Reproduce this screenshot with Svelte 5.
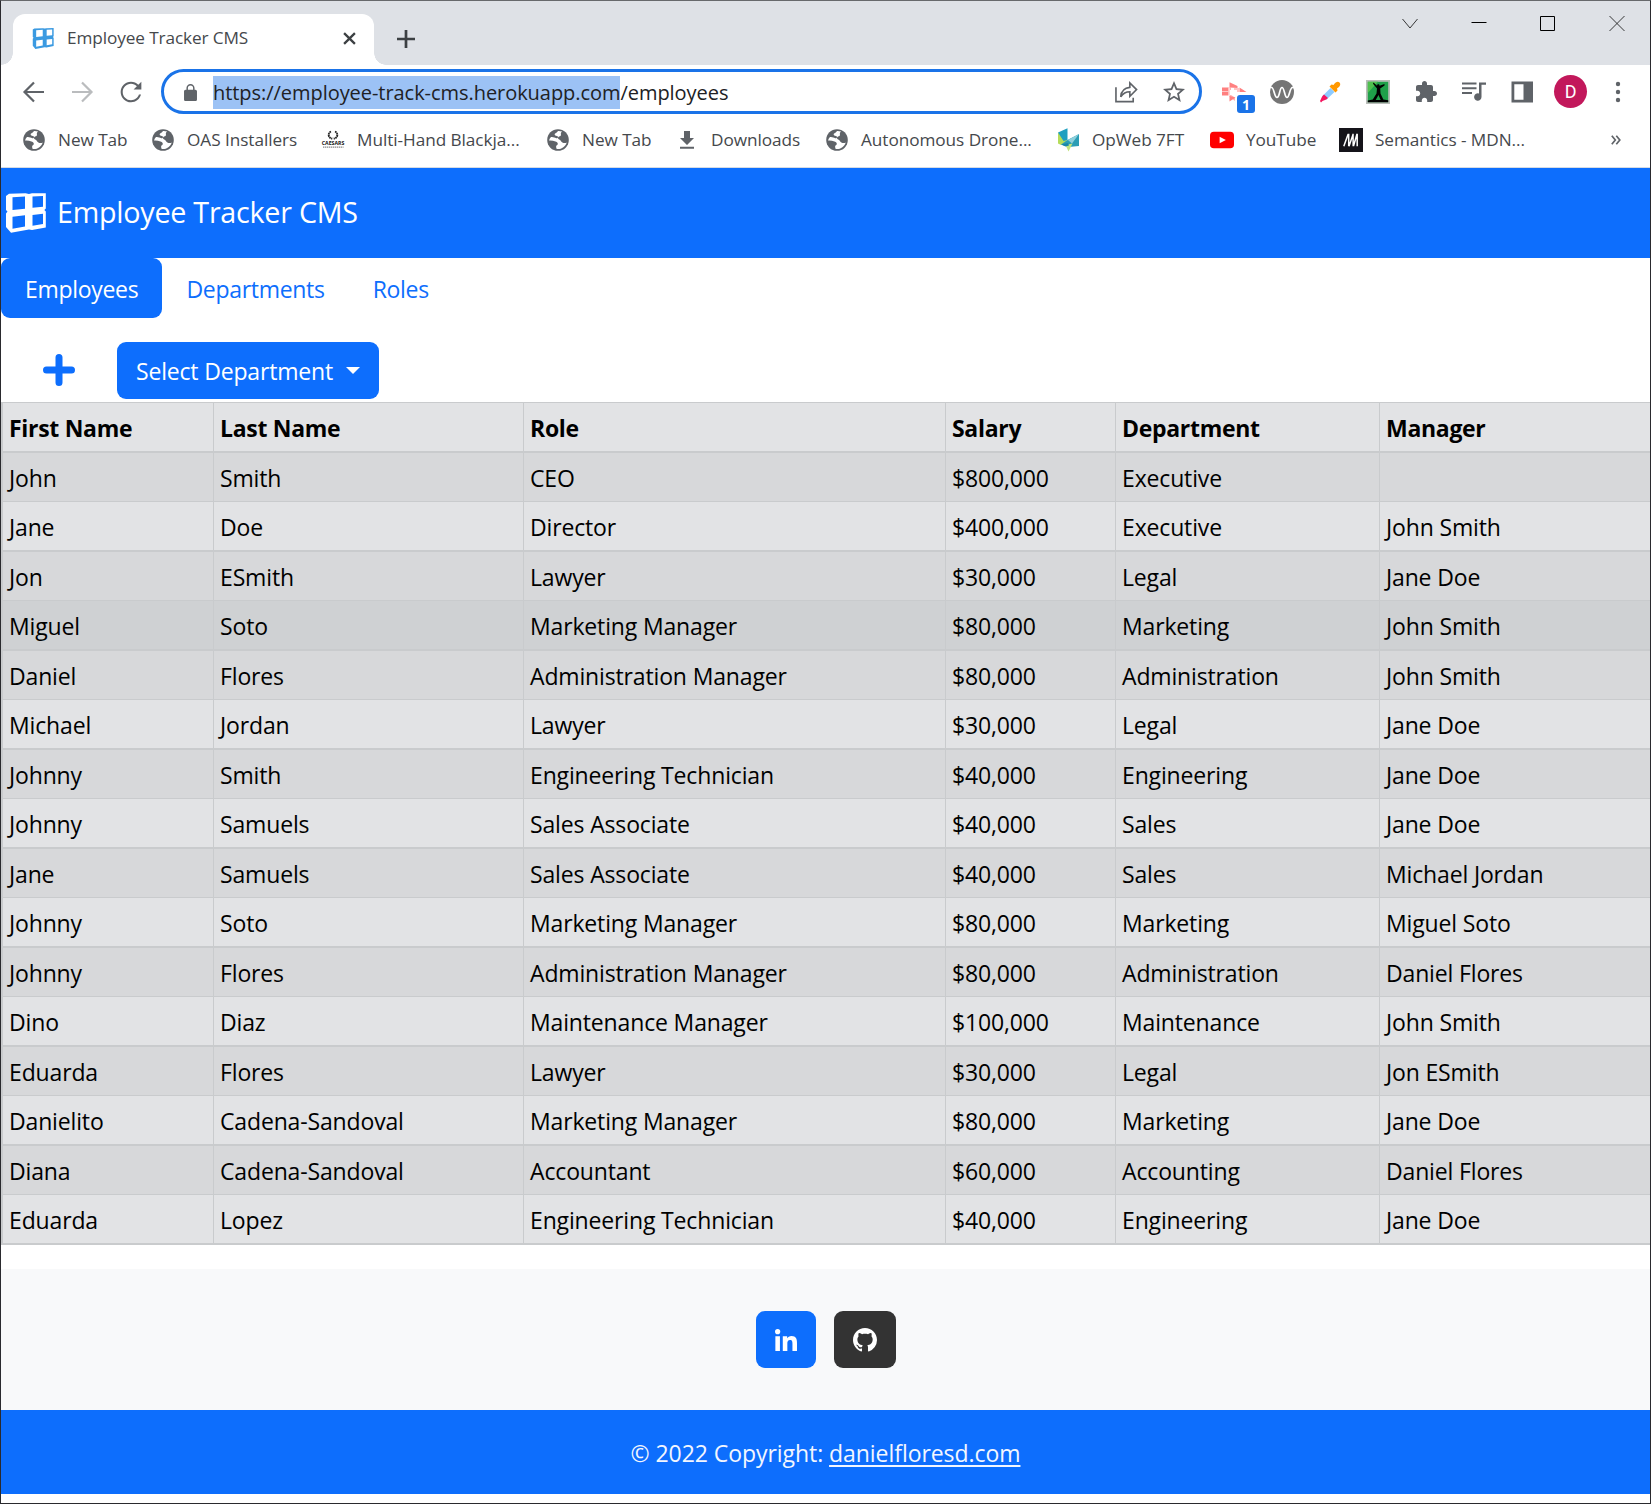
<script>
  const bookmarks = [
    { icon: 'globe', label: 'New Tab' },
    { icon: 'globe', label: 'OAS Installers' },
    { icon: 'caesars', label: 'Multi-Hand Blackja...' },
    { icon: 'globe', label: 'New Tab' },
    { icon: 'download', label: 'Downloads' },
    { icon: 'globe', label: 'Autonomous Drone...' },
    { icon: 'opweb', label: 'OpWeb 7FT' },
    { icon: 'youtube', label: 'YouTube' },
    { icon: 'mdn', label: 'Semantics - MDN...' },
  ];

  const columns = ['First Name', 'Last Name', 'Role', 'Salary', 'Department', 'Manager'];

  const employees = [
    ['John', 'Smith', 'CEO', '$800,000', 'Executive', ''],
    ['Jane', 'Doe', 'Director', '$400,000', 'Executive', 'John Smith'],
    ['Jon', 'ESmith', 'Lawyer', '$30,000', 'Legal', 'Jane Doe'],
    ['Miguel', 'Soto', 'Marketing Manager', '$80,000', 'Marketing', 'John Smith'],
    ['Daniel', 'Flores', 'Administration Manager', '$80,000', 'Administration', 'John Smith'],
    ['Michael', 'Jordan', 'Lawyer', '$30,000', 'Legal', 'Jane Doe'],
    ['Johnny', 'Smith', 'Engineering Technician', '$40,000', 'Engineering', 'Jane Doe'],
    ['Johnny', 'Samuels', 'Sales Associate', '$40,000', 'Sales', 'Jane Doe'],
    ['Jane', 'Samuels', 'Sales Associate', '$40,000', 'Sales', 'Michael Jordan'],
    ['Johnny', 'Soto', 'Marketing Manager', '$80,000', 'Marketing', 'Miguel Soto'],
    ['Johnny', 'Flores', 'Administration Manager', '$80,000', 'Administration', 'Daniel Flores'],
    ['Dino', 'Diaz', 'Maintenance Manager', '$100,000', 'Maintenance', 'John Smith'],
    ['Eduarda', 'Flores', 'Lawyer', '$30,000', 'Legal', 'Jon ESmith'],
    ['Danielito', 'Cadena-Sandoval', 'Marketing Manager', '$80,000', 'Marketing', 'Jane Doe'],
    ['Diana', 'Cadena-Sandoval', 'Accountant', '$60,000', 'Accounting', 'Daniel Flores'],
    ['Eduarda', 'Lopez', 'Engineering Technician', '$40,000', 'Engineering', 'Jane Doe'],
  ];
  const hovered = 3;
</script>

{#snippet gridLogo()}
  <path
    fill-rule="evenodd"
    d="M4 .8 20.500.3 24 1 27 .3 40.800.2V15.500l-1.500 1.500 1.500 1.500V34.500L27 37 24 36.500 6 39.800 1 34V20.500L2.500 18.500 1 17V3zM7.500 4.300v12.700l12.500-1.200V3.500zM27.500 3.500v11.300l10.500-1V3zM7.500 23.800V35.800l12.500-2.300V22.300zM27.500 22v10.800L38 31V20.800z"
  />
{/snippet}

{#snippet bookmarkIcon(name)}
  {#if name === 'globe'}
    <svg class="bm-icon" viewBox="0 0 24 24">
      <circle cx="12" cy="12" r="10.800" fill="#5f6368" />
      <path fill="#fff" d="M12.200 3c-1 .8-1.300 1.700-2.700 2.200-1.200.5-1 1.800-.2 2.300.9.500 2.200.2 2.700 1.200.4 1-.7 1.700-1.700 1.500-1.700-.4-3.200-1.500-5.300-1.100A9.200 9.200 0 0 0 3 12.500c1.800-.3 4.500.1 6.500.9 1.900.8 2.600 1.600 2.200 2.900-.3 1.100-1.500 1-1.600 2.200 0 1 .2 1.700.6 2.500 4.500.6 8.700-2.300 10-6.600-1.200 1-3 .9-4.300.1-1.500-1-1.800-2.600-3.200-3.100-1.200-.4-1.700-1.400-.8-2.300.8-.8 2.200-.6 2.500-1.800.3-1-.4-1.800.2-2.700.3-.5.700-.8 1-1C14.900 3.200 13.500 2.900 12.200 3z" />
    </svg>
  {:else if name === 'download'}
    <svg class="bm-icon" viewBox="0 0 24 24">
      <path fill="#5f6368" d="M19 10h-4V3H9v7H5l7 7zM5 18.700v2.100h14v-2.100z" />
    </svg>
  {:else if name === 'caesars'}
    <svg class="bm-icon" viewBox="0 0 24 24">
      <path fill="none" stroke="#222" stroke-width="1.900" stroke-dasharray="1.700 .5" d="M10 3.500C6.500 5 7 10.200 11.300 10.500M14 3.500c3.500 1.500 3 6.700-1.300 7" />
      <text x="12" y="16.800" text-anchor="middle" textLength="22.500" lengthAdjust="spacingAndGlyphs" class="cz">CAESARS</text>
      <path stroke="#888" stroke-width="1.200" stroke-dasharray="1.400 .6" d="M2 19.200h20.500" />
    </svg>
  {:else if name === 'opweb'}
    <svg class="bm-icon" viewBox="0 0 24 24">
      <path fill="#b5dc5a" d="M2 4.500 11.500 13 5 17 2 15.500z" />
      <path fill="#1f9fc0" d="M2 4.500 11.500.3V12L7.500 13z" />
      <path fill="#2b9db5" d="M5 16.500 11.500 12 23 6v12L12.500 19z" />
      <path fill="#8fd0dc" d="m12 12 11-6-7 9.500z" />
      <path fill="#c3e37c" d="m9.500 17 7-1.500-4 8z" />
      <path fill="#1a86a8" d="m5 16.500 7-1.500 1 2.500-3.500 1z" />
    </svg>
  {:else if name === 'youtube'}
    <svg class="bm-icon" viewBox="0 0 24 24">
      <rect y="3.700" width="24" height="16.600" rx="3.800" fill="#f00" />
      <path fill="#fff" d="m9.600 8.800 6.300 3.200-6.300 3.200z" />
    </svg>
  {:else}
    <svg class="bm-icon" viewBox="0 0 24 24">
      <path fill="#15141a" d="M0 0h24v24H0z" />
      <path fill="none" stroke="#fff" stroke-width="1.500" d="M4.800 18.200 9.200 6M9.700 5.800v12.400M10 18.200 14.200 6M14 5.800l.2 12.400M14.500 18 18 6M18.200 5.800v12.400" />
    </svg>
  {/if}
{/snippet}

<div class="window">
  <div class="tabstrip">
    <div class="tab">
      <svg class="favicon" viewBox="0 0 41 40" fill="#3b9ae1">{@render gridLogo()}</svg>
      <span class="tab-title">Employee Tracker CMS</span>
      <svg class="tab-close" viewBox="0 0 12 12"><path d="m1 1 10 10M11 1 1 11" /></svg>
    </div>
    <svg class="tab-new" viewBox="0 0 18 18"><path d="M9 0v18M0 9h18" /></svg>
    <div class="controls">
      <svg class="thin" viewBox="0 0 16 16"><path d="m.5 4 7.500 9 7.500-9" /></svg>
      <svg viewBox="0 0 16 16"><path d="M.5 7.500h15" /></svg>
      <svg viewBox="0 0 16 16"><path d="M.5 1.500h14v14H.5z" /></svg>
      <svg class="thin" viewBox="0 0 16 16"><path d="m.5 1 15 15M15.500 1l-15 15" /></svg>
    </div>
  </div>

  <div class="toolbar">
    <svg class="nav back" viewBox="0 0 24 24"><path d="M22 12H3M12 2.500 2.500 12l9.500 9.500" /></svg>
    <svg class="nav forward" viewBox="0 0 24 24"><path d="M2 12h19M12 2.500l9.500 9.500-9.500 9.500" /></svg>
    <svg class="nav reload" viewBox="3.500 3.500 17 17"><path d="M17.650 6.350C16.200 4.900 14.210 4 12 4c-4.420 0-7.990 3.580-7.990 8s3.570 8 7.990 8c3.730 0 6.840-2.550 7.730-6h-1.600c-.82 2.500-3.200 4.400-6.130 4.400-3.550 0-6.400-2.850-6.400-6.400s2.850-6.400 6.400-6.400c1.760 0 3.400.75 4.520 1.900L14 10H20V4z" /></svg>
    <div class="omnibox">
      <svg class="lock" viewBox="4 1 16 21"><path d="M18 8h-1V6c0-2.760-2.240-5-5-5S7 3.240 7 6v2H6c-1.100 0-2 .9-2 2v10c0 1.100.9 2 2 2h12c1.100 0 2-.9 2-2V10c0-1.100-.9-2-2-2zM15.200 8H8.800V6a3.200 3.200 0 0 1 6.400 0z" /></svg>
      <span class="url"><mark>https://employee-track-cms.herokuapp.com</mark><span>/employees</span></span>
      <svg class="share" viewBox="0 0 24 24"><path d="M1 7.500v15h18v-4M6 17.500c.5-6 3.500-9.200 9.500-9.800V3l7 7-7 7v-4.800c-4.300 0-7 1.500-9.500 5.300z" /></svg>
      <svg class="star" viewBox="2 2 20 19"><path d="m22 9.240-7.190-.62L12 2 9.190 8.630 2 9.240l5.460 4.730L5.820 21 12 17.270 18.180 21l-1.630-7.030zM12 15.400l-3.760 2.270 1-4.280-3.320-2.880 4.380-.38L12 6.100l1.710 4.040 4.380.38-3.320 2.880 1 4.280z" /></svg>
    </div>
    <div class="extensions">
      <div class="badged">
        <svg viewBox="0 0 24 24">
          <path fill="#ffb3b3" d="M5 7.500h4V10H7v5h2l4 2.500V21l-5.500-4V7z" />
          <path fill="#ff8080" d="M0 7.500h6.500v8H0zM7.500 2.200 15.500 6v2L7.500 7.500zM7.500 16l6 1.500-6 4zM17.500 7.500l7 4.500h-7z" />
          <path fill="#ffc4c4" d="M12 8h5.500v4H15V10h-3z" />
          <path stroke="#ffd9d9" stroke-width=".8" d="M0 11.500h6.500" />
        </svg>
        <span class="badge">1</span>
      </div>
      <svg viewBox="0 0 24 24">
        <circle cx="12" cy="12" r="12" fill="#757575" />
        <path fill="none" stroke="#fff" stroke-width="1.700" stroke-linejoin="round" d="M0 7.500h1.500c2.800 0 2.700 10 5.500 10s2.500-10 5-10 2.500 10 5 10 2.700-10 5.500-10H24" />
      </svg>
      <svg viewBox="0 0 24 24">
        <path fill="#8ecbff" d="m12.500 8 4 4-8.500 8-4-3.500z" />
        <path fill="#f5155f" d="M6 14.500 10 18c-2 2-4 2.500-5.500 3L3 22.500 2 21l1-2c.5-1.500 1-2.500 3-4.500z" />
        <path fill="#ff9800" d="M15.500 5c2.500-4 5-3.500 6-2.500s1.500 3.500-2.500 6l.5 2-2 2-6-6 2-2z" />
      </svg>
      <svg viewBox="0 0 24 24">
        <path fill="#b9bdb9" d="M0 0h24v24H0z" />
        <path fill="#1fa04a" d="M1.800 1.800h20.400v20.400H1.800z" />
        <path fill="#4fc04e" d="M1.800 1.800H12L1.800 13z" />
        <path d="m7.500 2.500 3.500 3.300c.3-2 2.500-1.800 2.500 0l5-1.800v1.500l-4.300 3 .3 5 2.800 6 4.900.8v1.900H1.800v-1.700l5-1 3.700-6 .5-5-4-4.800zM12.500 15l-2.800 5h5z" fill-rule="evenodd" />
      </svg>
      <svg viewBox="0 0 24 24"><path fill="#5f6368" d="M20.500 11H19V7c0-1.100-.9-2-2-2h-4V3.500C13 2.120 11.880 1 10.500 1S8 2.120 8 3.500V5H4c-1.100 0-1.990.9-1.990 2v3.800H3.500c1.490 0 2.700 1.210 2.700 2.700s-1.210 2.700-2.700 2.700H2V20c0 1.100.9 2 2 2h3.800v-1.500c0-1.490 1.210-2.700 2.700-2.700 1.490 0 2.700 1.210 2.700 2.700V22H17c1.100 0 2-.9 2-2v-4h1.500c1.380 0 2.500-1.120 2.500-2.500S21.880 11 20.500 11z" /></svg>
      <svg viewBox="0 0 24 24"><path fill="#5f6368" d="M0 2.500h14.500v2H0zM0 7.300h14.500v2H0zM0 12.100h10v2H0zM17 2.500h7v2.300h-4.500V17a3.700 3.700 0 1 1-2.500-3.500z" /></svg>
      <svg viewBox="0 0 24 24"><path fill="#5f6368" fill-rule="evenodd" d="M1.500 1.500h21.500v21h-21.500zM4.300 4.300v15.400h9.200V4.300z" /></svg>
      <span class="avatar">D</span>
      <svg viewBox="0 0 24 24" fill="#5f6368"><circle cx="11" cy="4" r="2.200" /><circle cx="11" cy="12" r="2.200" /><circle cx="11" cy="20" r="2.200" /></svg>
    </div>
  </div>

  <div class="bookmarks">
    {#each bookmarks as b}
      <span class="bookmark">{@render bookmarkIcon(b.icon)}<span>{b.label}</span></span>
    {/each}
    <svg class="more" viewBox="0 0 10 10"><path d="m.8.800 3.500 4.200L.8 9.200M5.300.800 8.800 5 5.300 9.200" /></svg>
  </div>

  <header>
    <svg class="logo" viewBox="0 0 41 40" fill="#fff">{@render gridLogo()}</svg>
    <h1>Employee Tracker CMS</h1>
  </header>

  <nav class="pills">
    <span class="pill active">Employees</span>
    <span class="pill">Departments</span>
    <span class="pill">Roles</span>
  </nav>

  <div class="actions">
    <svg class="plus" viewBox="0 0 32 32"><path d="M16 3.500v25M3.500 16h25" /></svg>
    <button>Select Department<i class="caret"></i></button>
  </div>

  <table>
    <colgroup>
      <col class="c1" /><col class="c2" /><col class="c3" /><col class="c4" /><col class="c5" /><col />
    </colgroup>
    <thead>
      <tr>{#each columns as c}<th>{c}</th>{/each}</tr>
    </thead>
    <tbody>
      {#each employees as row, i}
        <tr class:odd={i % 2 === 0} class:hovered={i === hovered}>
          {#each row as cell}<td>{cell}</td>{/each}
        </tr>
      {/each}
    </tbody>
  </table>

  <footer>
    <div class="social">
      <span class="social-btn in">
        <svg viewBox="0 0 448 448"><path d="M100.280 448H7.400V148.900h92.880zM53.790 108.100C24.090 108.100 0 83.500 0 53.800a53.790 53.790 0 0 1 107.580 0c0 29.700-24.100 54.300-53.790 54.300zM447.900 448h-92.680V302.400c0-34.700-.7-79.200-48.290-79.200-48.290 0-55.690 37.700-55.690 76.700V448h-92.780V148.900h89.080v40.800h1.300c12.400-23.500 42.690-48.300 87.880-48.300 94 0 111.280 61.900 111.280 142.300z" /></svg>
      </span>
      <span class="social-btn gh">
        <svg viewBox="0 0 16 16"><path d="M8 0C3.580 0 0 3.580 0 8c0 3.540 2.290 6.530 5.470 7.590.4.070.55-.17.55-.38 0-.19-.01-.82-.01-1.490-2.010.37-2.530-.49-2.690-.94-.09-.23-.48-.94-.82-1.130-.28-.15-.68-.52-.01-.53.63-.01 1.080.58 1.230.82.72 1.210 1.870.87 2.330.66.070-.52.28-.87.51-1.070-1.780-.2-3.640-.89-3.640-3.950 0-.87.31-1.590.82-2.150-.08-.2-.36-1.020.08-2.120 0 0 .67-.21 2.200.82.64-.18 1.320-.27 2-.27s1.360.09 2 .27c1.530-1.040 2.200-.82 2.200-.82.44 1.100.16 1.920.08 2.120.51.56.82 1.270.82 2.150 0 3.070-1.870 3.750-3.650 3.950.29.25.54.73.54 1.480 0 1.070-.01 1.930-.01 2.200 0 .21.15.46.55.38A8.010 8.010 0 0 0 16 8c0-4.420-3.580-8-8-8z" /></svg>
      </span>
    </div>
    <div class="copyright">© 2022 Copyright: <span class="link">danielfloresd.com</span></div>
  </footer>
</div>

<style>
  :global(body) {
    margin: 0;
    background: #fff;
  }
  .window {
    box-sizing: border-box;
    width: 1651px;
    height: 1504px;
    overflow: hidden;
    border: 1px solid #2a2a2e;
    border-top-color: #67696c;
    background: #fff;
    font-family: 'Open Sans', 'Noto Sans', sans-serif;
    font-size: 23px;
    line-height: 36px;
    letter-spacing: -0.15px;
    color: #000;
  }
  svg {
    display: block;
    flex: none;
  }

  .tabstrip {
    display: flex;
    height: 64px;
    background: #dee1e6;
  }
  .tab {
    position: relative;
    display: flex;
    align-items: center;
    box-sizing: border-box;
    width: 361px;
    height: 51px;
    margin: 13px 0 0 12px;
    padding: 0 18px 3px 19px;
    border-radius: 12px 12px 0 0;
    background: #fff;
  }
  .tab::before,
  .tab::after {
    content: '';
    position: absolute;
    bottom: 0;
    width: 12px;
    height: 12px;
  }
  .tab::before {
    left: -12px;
    background: radial-gradient(circle at 0 0, #dee1e6 11.500px, #fff 12px);
  }
  .tab::after {
    right: -12px;
    background: radial-gradient(circle at 100% 0, #dee1e6 11.500px, #fff 12px);
  }
  .favicon {
    width: 22px;
    height: 21px;
  }
  .tab-title {
    flex: 1;
    margin-left: 13px;
    font-size: 17.200px;
    line-height: 24px;
    letter-spacing: -0.100px;
    color: #45484c;
  }
  .tab-close {
    width: 13px;
    height: 13px;
    fill: none;
    stroke: #3c4043;
    stroke-width: 2.100;
  }
  .tab-new {
    width: 18px;
    height: 18px;
    margin: 29px 0 0 23px;
    fill: none;
    stroke: #3c4043;
    stroke-width: 2.700;
  }
  .controls {
    display: flex;
    gap: 53px;
    margin: 14px 25px 0 auto;
  }
  .controls svg {
    width: 16px;
    height: 16px;
    overflow: visible;
    fill: none;
    stroke: #000;
    stroke-width: 1;
  }
  .controls .thin {
    stroke: #222;
    stroke-width: 0.900;
  }

  .toolbar {
    display: flex;
    align-items: center;
    height: 53px;
  }
  .nav {
    width: 24px;
    height: 24px;
    fill: none;
    stroke: #5f6368;
    stroke-width: 2.200;
  }
  .back {
    margin-left: 21px;
  }
  .forward {
    margin-left: 24px;
    stroke: #babcbe;
  }
  .reload {
    width: 22px;
    height: 22px;
    margin-left: 26px;
    fill: #5f6368;
    stroke: none;
  }
  .omnibox {
    display: flex;
    align-items: center;
    box-sizing: border-box;
    width: 1041px;
    height: 45px;
    margin-left: 19px;
    padding: 0 14px 0 20px;
    border: 3px solid #1a73e8;
    border-radius: 23px;
  }
  .lock {
    width: 13px;
    height: 17px;
    margin-top: 2px;
    fill: #5f6368;
  }
  .url {
    flex: 1;
    margin: 2px 0 0 16px;
    font-size: 20px;
    line-height: 33px;
    letter-spacing: -0.050px;
    color: #202124;
  }
  mark {
    display: inline-block;
    background: #9cc2f5;
    color: inherit;
  }
  .share {
    width: 23px;
    height: 23px;
    fill: none;
    stroke: #5f6368;
    stroke-width: 1.700;
  }
  .star {
    width: 22px;
    height: 21px;
    margin-left: 25px;
    fill: #5f6368;
  }
  .extensions {
    display: flex;
    align-items: center;
    gap: 24px;
    margin-left: 20px;
  }
  .extensions svg {
    width: 24px;
    height: 24px;
    overflow: visible;
  }
  .badged {
    position: relative;
  }
  .badge {
    position: absolute;
    left: 15px;
    top: 15px;
    width: 18px;
    height: 18px;
    border-radius: 3px;
    background: #1a73e8;
    color: #fff;
    font-size: 14px;
    font-weight: 700;
    line-height: 19px;
    text-align: center;
  }
  .avatar {
    width: 33px;
    height: 33px;
    margin-right: -4px;
    margin-left: -4px;
    border-radius: 50%;
    background: #c2185b;
    color: #fff;
    font-family: Roboto, sans-serif;
    font-size: 18px;
    line-height: 33px;
    text-align: center;
  }

  .bookmarks {
    display: grid;
    grid-template-columns: 129px 170px 225px 129px 150px 231px 154px 129px 272px auto;
    align-items: center;
    box-sizing: border-box;
    height: 50px;
    padding: 0 0 5px 21px;
    border-bottom: 1px solid #d5dbe4;
    font-size: 17.200px;
    line-height: 24px;
    letter-spacing: -0.050px;
    color: #45484c;
    white-space: nowrap;
  }
  .bookmark {
    display: flex;
    align-items: center;
    gap: 12px;
  }
  .bm-icon {
    width: 24px;
    height: 24px;
    overflow: visible;
  }
  .cz {
    font-size: 5.500px;
    font-weight: 700;
    letter-spacing: 0;
    fill: #111;
  }
  .more {
    width: 10px;
    height: 10px;
    fill: none;
    stroke: #5f6368;
    stroke-width: 1.700;
  }

  header {
    display: flex;
    align-items: center;
    box-sizing: border-box;
    height: 90px;
    padding: 0 4px;
    background: #0d6efd;
    color: #fff;
  }
  .logo {
    width: 41px;
    height: 40px;
  }
  h1 {
    margin: 0 0 3px 11px;
    font-size: 28.700px;
    font-weight: 400;
    line-height: 45px;
    letter-spacing: -0.250px;
  }

  .pills {
    display: flex;
    height: 60px;
  }
  .pill {
    box-sizing: border-box;
    height: 60px;
    padding: 13px 24px 0;
    border-radius: 9px;
    color: #0d6efd;
    letter-spacing: -0.300px;
  }
  .active {
    background: #0d6efd;
    color: #fff;
  }

  .actions {
    display: flex;
    align-items: center;
    height: 57px;
    padding: 24px 0 3px 42px;
  }
  .plus {
    width: 32px;
    height: 32px;
    margin-bottom: 2px;
    fill: none;
    stroke: #0d6efd;
    stroke-width: 7;
    stroke-linecap: round;
  }
  button {
    display: flex;
    align-items: center;
    justify-content: space-between;
    box-sizing: border-box;
    width: 262px;
    height: 57px;
    margin-left: 42px;
    padding: 1px 19px 0;
    border: 0;
    border-radius: 9px;
    background: #0d6efd;
    color: #fff;
    font: inherit;
    letter-spacing: -0.180px;
  }
  .caret {
    margin-bottom: 2px;
    border: 7.500px solid transparent;
    border-top-color: #fff;
    border-bottom: 0;
  }

  table {
    width: 1649px;
    table-layout: fixed;
    border-collapse: separate;
    border-spacing: 0;
    border-bottom: 2px solid #c9cbcd;
  }
  .c1 { width: 212px; }
  .c2 { width: 310px; }
  .c3 { width: 422px; }
  .c4 { width: 170px; }
  .c5 { width: 264px; }
  th,
  td {
    box-sizing: border-box;
    height: 49px;
    padding: 7px 6px 5px;
    border-top: 1px solid #c9cbcd;
    border-left: 1px solid #c9cbcd;
    background: #e2e3e5;
    text-align: left;
    white-space: nowrap;
  }
  th {
    letter-spacing: -0.300px;
  }
  th:first-child,
  td:first-child {
    border-left-width: 2px;
  }
  .odd td {
    height: 50px;
    border-top-width: 2px;
    background: #d7d8da;
  }
  .hovered td {
    background: #cfd1d3;
  }

  footer {
    margin-top: 24px;
  }
  .social {
    display: flex;
    justify-content: center;
    gap: 18px;
    height: 99px;
    padding-top: 42px;
    background: #f8f9fa;
  }
  .social-btn {
    display: flex;
    align-items: center;
    justify-content: center;
    height: 57px;
    border-radius: 9px;
    fill: #fff;
  }
  .in {
    width: 60px;
    background: #0d6efd;
  }
  .in svg {
    width: 22px;
    height: 22px;
  }
  .gh {
    width: 62px;
    background: #333;
  }
  .gh svg {
    width: 24px;
    height: 24px;
  }
  .copyright {
    box-sizing: border-box;
    height: 84px;
    padding-top: 25px;
    background: #0d6efd;
    color: #f2f6ff;
    letter-spacing: -0.060px;
    text-align: center;
  }
  .link {
    text-decoration: underline;
    text-decoration-thickness: 2px;
    text-underline-offset: 3px;
  }
</style>
